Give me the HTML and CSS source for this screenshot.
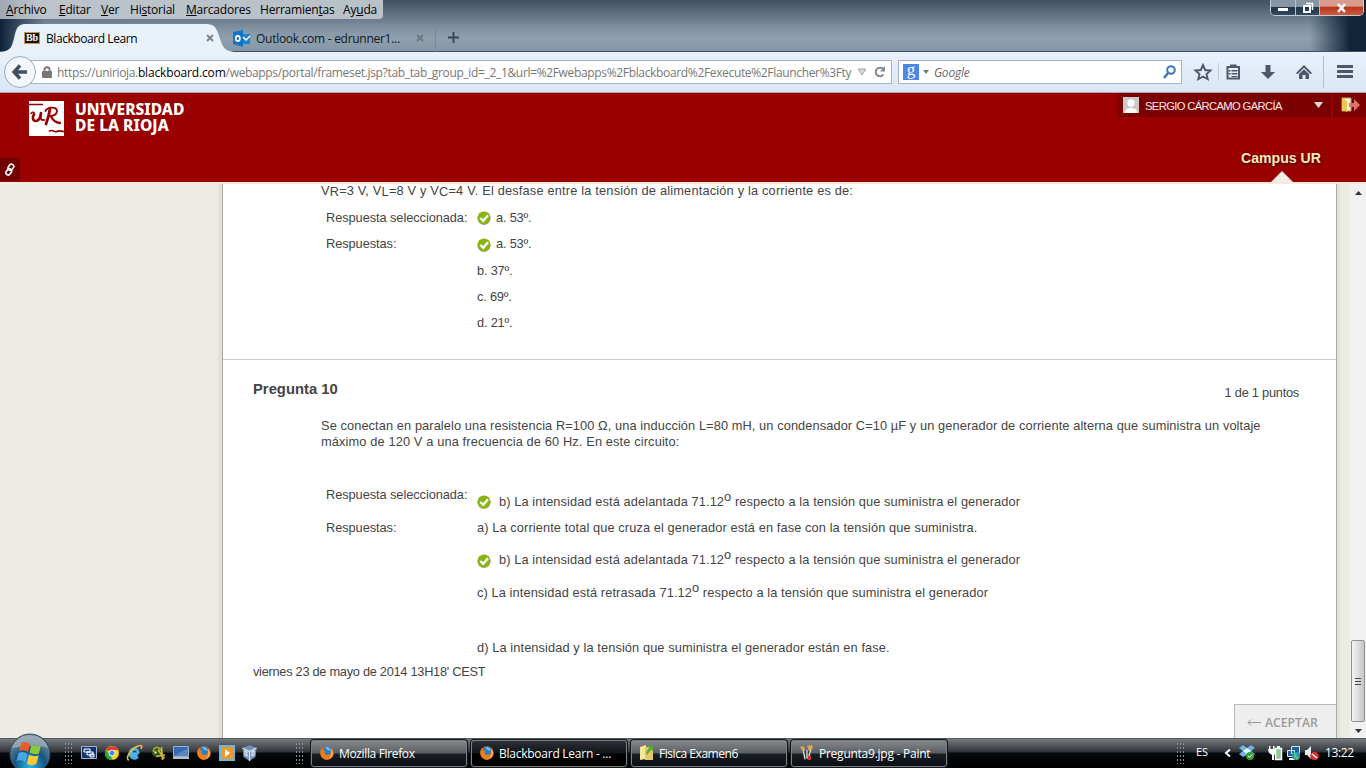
FILE: index.html
```html
<!DOCTYPE html>
<html lang="es">
<head>
<meta charset="utf-8">
<title>Blackboard Learn</title>
<link rel="stylesheet" href="styles.css">
</head>
<body>
<svg class="defs" width="0" height="0" aria-hidden="true">
  <defs>
    <symbol id="check" viewBox="0 0 14 14"><circle cx="7" cy="7.300" r="6.600" fill="#9aa878"/><circle cx="7" cy="6.800" r="6.400" fill="#8ab414"/><path d="M3.3 7 6.2 9.800 11 4.200" fill="none" stroke="#fff" stroke-width="2.3"/></symbol>
    <symbol id="firefox" viewBox="0 0 14 14"><circle cx="7" cy="7" r="6.800" fill="#e8641b"/><circle cx="7.200" cy="5.600" r="5" fill="#2b80c4"/><path d="M5 1.500C8 .5 10 2 11 5L8 4Z" fill="#7cc8ee"/><path d="M.4 5C1 3 2 2 2.300 2L3 4 5 5 4.500 7C5 9 8 10 10 8 11 7 11.500 5 11 3 12 4 13 6 12.800 8 12 12 9 14 6 13.700 2 13 0 9 .4 5Z" fill="#ef7d1c"/><path d="M11 2.800C14 6 13 11 9 13 12 10 12 7 11 2.800Z" fill="#ffd45c"/></symbol>
    <symbol id="close" viewBox="0 0 8 8"><path d="m1 1 6 6m0-6-6 6" stroke="currentColor" stroke-width="2"/></symbol>
  </defs>
</svg>
<div class="screen">
  <div class="titlebar">
    <div class="topline">
      <nav class="menu"><span class="m1"><u>A</u>rchivo</span><span class="m2"><u>E</u>ditar</span><span class="m3"><u>V</u>er</span><span class="m4">Hi<u>s</u>torial</span><span class="m5"><u>M</u>arcadores</span><span class="m6">Herramien<u>t</u>as</span><span class="m7">Ay<u>u</u>da</span></nav>
      <div class="winbtns">
        <span class="wb"><svg width="12" height="10"><rect x="1" y="5" width="10" height="3" fill="#fff"/></svg></span>
        <span class="wb"><svg width="12" height="12"><path d="M4 1.500h6.500V8" fill="none" stroke="#fff" stroke-width="1.500"/><path d="M2 4h6v6H2Z" fill="none" stroke="#fff" stroke-width="2"/></svg></span>
        <span class="wb wclose"><svg width="12" height="10"><path d="m2 1 7 8m0-8-7 8" stroke="#fff" stroke-width="2.600"/></svg></span>
      </div>
    </div>
    <div class="tabs">
      <div class="tab active">
        <svg class="tabshape" width="222" height="28"><path d="M0 28C12 27 12 22 15 10 17 2 20 0 26 0H204C214 0 215 2 218 9 222 20 222 27 235 28Z" fill="#e9f1fb"/></svg>
        <span class="bb">Bb</span><span class="tabtitle t1">Blackboard Learn</span><svg class="x" width="8" height="8"><use href="#close"/></svg>
      </div>
      <div class="tab second">
        <svg width="17" height="17"><path d="M0 2 10 0v17L0 14Z" fill="#1274c4"/><path d="M10 4h7v10h-7Z" fill="#1b82d4"/><path d="m10 7 3 3 4-4" fill="none" stroke="#fff" stroke-width="1.500"/><ellipse cx="4.800" cy="8.500" rx="2.100" ry="2.600" fill="none" stroke="#fff" stroke-width="1.700"/></svg>
        <span class="tabtitle t2">Outlook.com - edrunner1...</span><svg class="x" width="8" height="8"><use href="#close"/></svg>
      </div>
      <svg class="plus" width="11" height="11"><path d="M5.500 0v11M0 5.500h11" stroke="#344454" stroke-width="1.800"/></svg>
    </div>
  </div>

  <div class="toolbar">
    <div class="back"><svg width="16" height="16"><path d="M8 1.500 2 8l6 6.500M2.500 8H15" fill="none" stroke="#414e5f" stroke-width="3.400"/></svg></div>
    <div class="url">
      <svg width="10" height="12"><path d="M2.500 6V3.500C2.500.5 7.500.5 7.500 3.500V6" fill="none" stroke="#777" stroke-width="1.800"/><rect y="5" width="10" height="7" rx="1" fill="#777"/></svg>
      <span class="address">https://unirioja.<b>blackboard.com</b>/webapps/portal/frameset.jsp?tab_tab_group_id=_2_1&amp;url=%2Fwebapps%2Fblackboard%2Fexecute%2Flauncher%3Fty</span>
      <svg class="tri" width="10" height="8"><path d="M1 1h8L5 7Z" fill="#d4d7db" stroke="#a5a8ad"/></svg>
      <svg class="reload" width="12" height="12"><path d="M9.500 8.500A4.300 4.300 0 1 1 9 2.800" fill="none" stroke="#7d8a94" stroke-width="2"/><path d="M11 0v5.500H6Z" fill="#7d8a94"/></svg>
    </div>
    <div class="search">
      <span class="g">g</span><svg width="6" height="4"><path d="M0 0h6L3 4Z" fill="#777"/></svg><span class="google">Google</span>
      <svg class="mag" width="13" height="14"><circle cx="8" cy="5" r="3.800" fill="#eef7ff" stroke="#4077b3" stroke-width="2"/><path d="m5 8-4 5" stroke="#4077b3" stroke-width="2.500"/></svg>
    </div>
    <svg class="tools" width="168" height="40" fill="#4b5968">
      <path d="m13 13 2.200 5 5.300.5-4 3.500 1.200 5.200L13 24.500l-4.700 2.700L9.500 22l-4-3.500 5.300-.5Z" fill="none" stroke="#4b5968" stroke-width="1.900"/>
      <path d="M28.500 11v17" stroke="#c2cad3"/>
      <path d="M37.500 15h11.500v11.500H37.500Z" fill="none" stroke="#4b5968" stroke-width="2"/><path d="M40 12.500h6.500V16H40ZM41.500 18h6v1.500h-6Zm0 3h6v1.500h-6Zm0 3h6v1h-6ZM38.500 18h2v1.500h-2Zm0 3h2v1.500h-2Z"/>
      <path d="M75.500 13h5v7h4.500L78 27l-7-7h4.500Z"/>
      <path d="m106 21 8-8 8 8-1.500 1.300L114 15.800 107.500 22.300Zm3 1 5-4.800 5 4.800v5h-3.500v-4h-3v4H109Z"/>
      <path d="M133.500 4v32" stroke="#b7c0ca"/>
      <path d="M147 13h16v3h-16Zm0 5h16v3h-16Zm0 5h16v3h-16Z"/>
    </svg>
  </div>

  <header class="brand">
    <div class="brandleft">
      <div class="logo">
        <svg width="35" height="35"><path d="M0 0h35v35H0Z" fill="#fff"/><path d="M0 3.500h14M20 30.500c3-3 6 1.500 8 0s4 0 7 0" fill="none" stroke="#900" stroke-width="1.600"/><g fill="none" stroke="#900" stroke-linecap="round"><path d="M2 12.500c2-2 3.500-1.500 3 1" stroke-width="1.500"/><path d="M5 13c-2 4-1 7 1.500 7 3 0 5-3 5.500-8" stroke-width="2.600"/><path d="M12 12c-1 5-.5 7.500 3 7" stroke-width="2"/><path d="M21 8c-1 6-2.500 11-4 15" stroke-width="2.800"/><path d="M16.500 10C18 6 28 5 28 10c0 3.500-4 5-7 5" stroke-width="1.900"/><path d="M22 15.500c2 4 4 6 9 6.500" stroke-width="2.300"/></g></svg>
        <div class="logotext"><span>UNIVERSIDAD</span><span>DE LA RIOJA</span></div>
      </div>
      <div class="link"><svg width="12" height="13"><g fill="none" stroke="#fff" stroke-width="1.600"><rect x="4.800" y="1" width="4.500" height="6.500" rx="2.200" transform="rotate(35 7 4)"/><rect x="2.400" y="5.500" width="4.500" height="6.500" rx="2.200" transform="rotate(35 4.500 9)"/></g></svg></div>
    </div>
    <div class="brandright">
      <div class="userrow">
        <div class="user"><svg width="16" height="16"><path d="M0 0h16v16H0Z" fill="#cbc8c5"/><circle cx="8" cy="6" r="3.700" fill="#fff"/><path d="M2 16c0-4 3-5 6-5s6 1 6 5Z" fill="#fff"/></svg><span>SERGIO CÁRCAMO GARCÍA</span><svg class="udown" width="9" height="6"><path d="M0 0h9L4.500 6Z" fill="#eadada"/></svg></div>
        <div class="exit"><svg width="20" height="16"><path d="M1 1h9v13H1Z" fill="#f8f3dc" stroke="#c59d43"/><path d="m1 1 5 3v11l-5-3Z" fill="#efc64c"/><path d="M8 6h5V2l6 6-6 6v-4H8Z" fill="#dc7470"/></svg></div>
      </div>
      <div class="campus"><span>Campus UR</span><i></i></div>
    </div>
  </header>

  <main class="main">
    <aside class="side"></aside>
    <section class="sheet">
      <div class="q9">
        <p class="lead">V<sub>R</sub>=3 V, V<sub>L</sub>=8 V y V<sub>C</sub>=4 V. El desfase entre la tensión de alimentación y la corriente es de:</p>
        <div class="row"><label>Respuesta seleccionada:</label><svg class="ok" width="14" height="14"><use href="#check"/></svg><span class="short">a. 53º.</span></div>
        <div class="row"><label>Respuestas:</label><svg class="ok low" width="14" height="14"><use href="#check"/></svg><span class="short">a. 53º.</span></div>
        <div class="row more"><label></label><span class="short">b. 37º.</span></div>
        <div class="row"><label></label><span class="short">c. 69º.</span></div>
        <div class="row"><label></label><span class="short">d. 21º.</span></div>
      </div>
      <div class="q10">
        <div class="qhead"><h3>Pregunta 10</h3><span>1 de 1 puntos</span></div>
        <p class="question"><span class="l1">Se conectan en paralelo una resistencia R=100 Ω, una inducción L=80 mH, un condensador C=10 µF y un generador de corriente alterna que suministra un voltaje</span><br><span class="l2">máximo de 120 V a una frecuencia de 60 Hz. En este circuito:</span></p>
        <div class="row tall"><label class="up">Respuesta seleccionada:</label><svg class="ok wide" width="14" height="14"><use href="#check"/></svg><span class="long">b) La intensidad está adelantada 71.12<sup>o</sup> respecto a la tensión que suministra el generador</span></div>
        <div class="row"><label>Respuestas:</label><span class="long">a) La corriente total que cruza el generador está en fase con la tensión que suministra.</span></div>
        <div class="row mid first"><label></label><svg class="ok wide low" width="14" height="14"><use href="#check"/></svg><span class="long">b) La intensidad está adelantada 71.12<sup>o</sup> respecto a la tensión que suministra el generador</span></div>
        <div class="row mid"><label></label><span class="long">c) La intensidad está retrasada 71.12<sup>o</sup> respecto a la tensión que suministra el generador</span></div>
        <div class="row gap"><label></label><span class="long">d) La intensidad y la tensión que suministra el generador están en fase.</span></div>
      </div>
      <div class="stamp">viernes 23 de mayo de 2014 13H18' CEST</div>
      <div class="actions"><div class="accept"><svg width="14" height="7"><path d="M4 .5 1 3.500l3 3M1 3.500h13" fill="none" stroke="#999"/></svg><span>ACEPTAR</span></div></div>
    </section>
    <div class="margin"></div>
    <div class="scroll">
      <svg width="7" height="4"><path d="M0 4h7L3.500 0Z" fill="#333"/></svg>
      <div class="thumb"><i></i><i></i><i></i></div>
      <svg width="7" height="4"><path d="M0 0h7L3.500 4Z" fill="#333"/></svg>
    </div>
  </main>

  <footer class="taskbar">
    <svg class="orb" width="44" height="35"><defs><radialGradient id="og" cx=".5" cy=".8" r=".7"><stop offset="0" stop-color="#32b8e8"/><stop offset=".55" stop-color="#14547e"/><stop offset="1" stop-color="#738797"/></radialGradient></defs><circle cx="22" cy="21" r="20" fill="url(#og)" stroke="#34495a"/><path d="M4 15C9-2 35-2 40 15 28 11 16 13 4 15Z" fill="#b2c0c9" opacity=".6"/><path d="M13.500 10c3-2 6-1 8.500 1l-2 8c-3-2-6-2-9-1Z" fill="#ee5b2b"/><path d="M23.500 11.500c3 2 6.500 2 9.500 0l-2 9c-3 1-6 1-9.500-1Z" fill="#8dc63f"/><path d="M10.500 20c3-2 6.500-1 9 1l-2 8c-3-2-6-2-9-1Z" fill="#45a7e8"/><path d="M21 21.500c3 2 6.500 2 9.500 1l-2 8c-3 2-6 2-9.500 0Z" fill="#ffc93c"/></svg>
    <i class="grip g1"></i>
    <div class="quick">
      <svg width="16" height="14"><path d="M.5.5h15v12H.5Z" fill="#17356c" stroke="#9cb3cf"/><path d="M3 3h6v3H3Zm3 3h6v3H6Zm3 2h4v3H9Z" fill="#1f4f98" stroke="#fff"/></svg>
      <svg width="14" height="14"><circle cx="7" cy="7" r="7" fill="#fcd116"/><path d="M7 7 1 3.500C4-1 11-1 13.500 4H7Z" fill="#e23b2e"/><path d="M1 3.500 5 9l3 4.900C1 15-2 8 1 3.500Z" fill="#2fa34b"/><circle cx="7" cy="7" r="3.300" fill="#fff"/><circle cx="7" cy="7" r="2.500" fill="#4285f4"/></svg>
      <svg width="17" height="16"><path d="M12.500 8.500H5.500C6 11.500 10 11.500 11 9.800M5.300 7.500C6 3.500 12 3 12.500 8.500M11.800 11.500C9 15.500 4 13 4 8.500 4 4 8 2.500 10.500 4" fill="none" stroke="#4ab3ee" stroke-width="2.400"/><path d="M3 15C-1 15 3 5.500 10 2s6 0 5 2" fill="none" stroke="#e7bd38" stroke-width="1.600"/></svg>
      <svg width="15" height="16"><circle cx="6" cy="6.500" r="5.500" fill="#34551b"/><path d="M2.500 7c0-6 6-6 7-1" fill="none" stroke="#93a848" stroke-width="1.800"/><circle cx="4.500" cy="7.500" r="1.200" fill="#d9e6a4"/><path d="m10.500 2 1 13M5 11.500l9-1.500M7 5l6.500 8.500" stroke="#d4b638" stroke-width="1.600"/></svg>
      <svg width="16" height="14"><path d="M.5.5h15v10H.5Z" fill="#3769b0" stroke="#90b3d8"/><path d="m1 10 14-8v8Z" fill="#5c84bb"/><path d="M0 11h16v2H0Z" fill="#b4bec6"/></svg>
      <svg width="14" height="14"><use href="#firefox"/></svg>
      <svg width="16" height="16"><path d="M0 0h16v16H0Z" fill="#67b9dd"/><path d="M2 2h12v12H2Z" fill="#f0962a"/><path d="m6 4 5 4-5 4Z" fill="#fff"/></svg>
      <svg width="15" height="16"><path d="m7.500 0 7 3-1 9-6 4-6-4-1-9Z" fill="#718eb5"/><path d="m.5 3 7 3.500 7-3.500M7.500 6.500V16M3 6l2 1v4l-2-1Zm9 0-2 1v4l2-1Z" fill="none" stroke="#dce7f3" stroke-width="1.200"/></svg>
    </div>
    <i class="grip g2"></i>
    <div class="tasks">
      <div class="task"><svg width="14" height="14"><use href="#firefox"/></svg><span class="k1">Mozilla Firefox</span></div>
      <div class="task on"><svg width="14" height="14"><use href="#firefox"/></svg><span class="k2">Blackboard Learn - ...</span></div>
      <div class="task"><svg width="14" height="16"><path d="M0 2 6 0v14l-6 1Z" fill="#f8e69a"/><path d="M5 2h8v13H5Z" fill="#e3c768"/><path d="m8 1 5 0v5l-2-1-4 5-1-3 3-4Z" fill="#4fb52f"/></svg><span class="k3">Fisica Examen6</span></div>
      <div class="task"><svg width="14" height="16"><path d="M3 6h8l-1 9H4Z" fill="#343b42"/><path d="m3 4 2 10M11 4 8 14M7 5v8" stroke="#ddd" stroke-width="1.300"/><path d="M0 2c3-2 5 0 5 3H2ZM7 1l5-1 1 3-4 3Z" fill="#d9a755"/><path d="M8 11h3v4H8Z" fill="#c8321f"/></svg><span class="k4">Pregunta9.jpg - Paint</span></div>
    </div>
    <i class="grip g3"></i>
    <div class="tray">
      <span class="es">ES</span>
      <svg class="chev" width="7" height="8"><path d="M6 .5 2 4l4 3.500" fill="none" stroke="#fff" stroke-width="2"/></svg>
      <svg class="drop" width="16" height="16"><path d="m4 0 4 3 4-3 4 3-4 3 4 3-4 3-4-2-4 2-4-3 4-3-4-3Z" fill="#6bb6e8"/><path d="m4 6 4-3 4 3-4 3Z" fill="#e5f6ff"/><circle cx="11" cy="11" r="4" fill="#3a9d36"/><path d="m9 11 1.500 1.500L13 9.500" fill="none" stroke="#fff"/></svg>
      <svg class="power" width="15" height="16"><path d="M7.500 3.500h6v11h-6Z" fill="#8fc795" stroke="#fff" stroke-width="1.500"/><path d="M9 1h3v2H9ZM0 4h8v4L6 10v5H4v-5L1 8ZM1 1h1.500v3H1Zm4 0h1.500v3H5Z" fill="#fff"/></svg>
      <svg class="net" width="15" height="16"><path d="M5.500 1.500h8v7h-8ZM1.500 5.500h7v6h-7Z" fill="#1762a4" stroke="#dce9f2"/><path d="M3 14h6" stroke="#fff" stroke-width="2"/><circle cx="10" cy="11" r="4" fill="#2495c8"/><path d="m8 8 3 1-1 2 3 2-2 2-3-3Z" fill="#62c657"/></svg>
      <svg class="vol" width="16" height="16"><path d="M1 5h2l4-4v13l-4-4H1Z" fill="#e9eef2"/><circle cx="10.500" cy="11" r="4.300" fill="#d73030"/><path d="m8 9 5 4" stroke="#fff" stroke-width="1.500"/></svg>
      <span class="clock">13:22</span>
    </div>
  </footer>
</div>
</body>
</html>
```

FILE: styles.css
```css
* { box-sizing: border-box; }
body { margin: 0; font-family: "Open Sans", "Noto Sans", sans-serif; font-size: 12px; }
svg { display: block; flex: none; }
.defs { position: absolute; }
.screen { width: 1366px; height: 768px; overflow: hidden; display: flex; flex-direction: column; }

.titlebar { height: 52px; flex: none; border-bottom: 1px solid #42505f; background: linear-gradient(90deg, #0d2238 0, rgba(13,34,56,0) 45px, rgba(13,34,56,0) 1310px, #10253a 1350px), linear-gradient(#3e5061 0, #5f7182 14px, #8395a5 30px, #8e9fae 38px, #8596a6 51px); }
.topline { height: 24px; display: flex; justify-content: space-between; align-items: flex-start; }
.menu { width: 383px; height: 19px; padding-left: 6px; display: flex; line-height: 19px; border-radius: 0 0 4px 0; white-space: nowrap; background: linear-gradient(90deg, #a0a9b2, #bcc3ca 10%, #b9c1c8); color: #000; }
.menu span { flex: none; letter-spacing: -.2px; }
.m1 { width: 53px; } .m2 { width: 42px; } .m3 { width: 29px; } .m4 { width: 56px; } .m5 { width: 74px; } .m6 { width: 83px; }
.menu u { text-underline-offset: 1px; }
.winbtns { display: flex; width: 94px; height: 16px; margin-right: 2px; border: 1px solid #c3ccd5; border-top: 0; border-radius: 0 0 5px 5px; overflow: hidden; }
.wb { width: 25px; display: flex; align-items: center; justify-content: center; border-right: 1px solid #b6bfc8; background: linear-gradient(#8796a5 0 45%, #20344a 50%, #34495e); }
.wclose { width: 43px; border: 0; background: linear-gradient(#d99b8c 0 40%, #b9381e 50%, #cf5b3c); }
.tabs { height: 28px; display: flex; align-items: stretch; }
.tab { display: flex; align-items: center; position: relative; color: #000; }
.active { width: 233px; padding-left: 24px; }
.tabshape { position: absolute; left: 0; top: 0; width: 235px; overflow: visible; }
.bb { position: relative; width: 16px; height: 12px; background: #141414; border: 1px solid #c79a3b; color: #fff; font: bold 10px/10px "Liberation Serif", serif; text-align: center; }
.tabtitle { position: relative; white-space: nowrap; }
.t1 { width: 160px; margin-left: 6px; letter-spacing: -.43px; }
.x { position: relative; color: #6d7782; }
.active .x { color: #7c838b; }
.second { width: 203px; border-right: 1px solid #78899a; }
.t2 { width: 160px; margin-left: 6px; letter-spacing: -.28px; }
.second .tabtitle { color: #101820; }
.plus { margin: 8px 0 0 12px; }

.toolbar { height: 41px; flex: none; display: flex; background: linear-gradient(#e9f1fb, #dbe7f6); border-bottom: 1px solid #b3a3b0; }
.back { position: relative; z-index: 1; width: 32px; height: 32px; margin: 4px 0 0 4px; border: 1px solid #9baabc; border-radius: 50%; background: #f3f7fc; display: flex; align-items: center; justify-content: center; }
.url { width: 868px; height: 24px; margin: 8px 0 0 -12px; padding-left: 17px; border: 1px solid #a5b3c5; background: #fff; display: flex; align-items: center; }
.address { width: 795px; margin-left: 5px; flex: none; white-space: nowrap; color: #777; letter-spacing: -.34px; }
.address b { font-weight: 400; color: #000; letter-spacing: -.15px; }
.tri { margin-left: 5px; } .reload { margin-left: 7px; }
.search { width: 284px; height: 24px; margin: 8px 0 0 6px; padding: 0 5px 0 4px; border: 1px solid #a5b3c5; background: #fff; display: flex; align-items: center; }
.g { width: 16px; height: 16px; margin-right: 4px; background: #4b86e8; color: #fff; font: 17px/11px "Liberation Serif", serif; text-align: center; }
.google { margin-left: 5px; width: 231px; font-style: italic; color: #666; letter-spacing: -.2px; }
.tools { margin-left: 8px; }

.brand { height: 89px; flex: none; background: #900; display: flex; justify-content: space-between; font-family: "Liberation Sans", Arial, sans-serif; }
.brandleft { display: flex; flex-direction: column; justify-content: space-between; }
.logo { display: flex; padding: 8px 0 0 29px; }
.logotext { margin: 1px 0 0 11px; height: 32px; color: #fff; font: 800 15.6px/15.5px "Noto Sans", sans-serif; white-space: nowrap; }
.logotext span { display: block; }
.link { width: 20px; height: 23px; margin-bottom: 1px; padding: 5px 0 0 4px; background: #720000; }
.brandright { width: 249px; display: flex; flex-direction: column; justify-content: space-between; }
.userrow { display: flex; gap: 2px; height: 24px; }
.user { width: 214px; display: flex; align-items: center; padding-left: 6px; background: #7b0000; color: #fbeaea; font-size: 11.2px; }
.user span { width: 169px; margin: 1px 0 0 6px; white-space: nowrap; letter-spacing: -.62px; }
.exit { width: 33px; padding: 4px 0 0 8px; background: #7b0000; }
.campus { width: 84px; margin-left: 122px; display: flex; flex-direction: column; align-items: center; color: #ffe9b8; font-weight: bold; font-size: 14.1px; line-height: 17px; white-space: nowrap; text-shadow: 1px 1px 3px #300; }
.campus i { width: 0; margin: 4px 0 0 1px; border: 11px solid transparent; border-top: 0; border-bottom-color: #f3ede4; }

.main { height: 556px; flex: none; display: flex; border-top: 2px solid #fae9db; background: #edebe4; font-family: "Liberation Sans", Arial, sans-serif; font-size: 12.8px; color: #444; }
.side { width: 222px; background: linear-gradient(90deg, #edebe3 216px, #dedbd5); }
.sheet { width: 1115px; background: #fff; border: solid #aaa; border-width: 0 1px; display: flex; flex-direction: column; }
.q9 { height: 176px; padding-left: 98px; border-bottom: 1px solid #ccc; }
.lead { margin: 0 0 7px; height: 14px; line-height: 14px; white-space: nowrap; letter-spacing: .18px; }
sub, sup { font-size: inherit; line-height: 0; }
sub { vertical-align: -1px; } sup { vertical-align: 5px; }
.row { height: 26px; display: flex; align-items: center; padding-left: 5px; white-space: nowrap; line-height: 26px; }
.row label { width: 151px; letter-spacing: -.07px; }
.short { letter-spacing: -.2px; }
.long { letter-spacing: .1px; }
.ok { margin: 0 5px 0 0; } .ok.wide { margin-right: 8px; } .ok.low { margin-top: 2px; }
.more { margin-top: 1px; }
.q10 { padding-left: 98px; height: 301px; }
.qhead { height: 58px; margin-left: -68px; padding: 20px 37px 0 0; display: flex; justify-content: space-between; }
.qhead h3 { margin: 0; font-size: 14.8px; line-height: 18px; }
.qhead span { line-height: 26px; letter-spacing: -.24px; }
.question { margin: 0 0 39px; line-height: 16px; white-space: nowrap; }
.l1 { letter-spacing: .093px; } .l2 { letter-spacing: .13px; }
.tall { height: 26px; } .up { align-self: flex-start; margin-top: -7px; }
.mid { margin-top: 6px; height: 27px; }
.first { margin-top: 5px; }
.gap { margin-top: 29px; }
.stamp { padding-left: 30px; line-height: 24px; margin-top: -1px; letter-spacing: -.28px; }
.actions { margin-top: auto; display: flex; justify-content: flex-end; }
.accept { width: 102px; height: 34px; padding: 2px 0 0 12px; border: 1px solid #bbb; border-width: 1px 0 0 1px; background: #eee; display: flex; align-items: center; gap: 4px; color: #999; font: 600 12.2px "Open Sans", sans-serif; }
.margin { width: 13px; background: linear-gradient(90deg, #e0ddd4, #edebe3 5px); }
.scroll { width: 16px; background: #f1f1f1; display: flex; flex-direction: column; align-items: center; padding: 7px 0 5px; }
.thumb { width: 14px; height: 82px; margin: auto 0 7px; border: 1px solid #929292; border-radius: 2px; background: linear-gradient(90deg, #f4f4f4, #ddd 50%, #c5c5c5); display: flex; flex-direction: column; align-items: center; justify-content: center; gap: 2px; }
.thumb i { width: 6px; height: 1px; background: #444; }

.taskbar { position: relative; height: 30px; flex: none; display: flex; align-items: center; background: linear-gradient(#33383d 0, #767a7e 1px, #55595d 7px, #303438 14px, #05090d 15px, #000); color: #fff; }
.orb { position: absolute; left: 8px; top: -5px; }
.grip { width: 8px; height: 22px; background: radial-gradient(circle, #8c8f92 0 .6px, transparent 1px) 0 0 / 3px 4px; }
.g1 { margin-left: 64px; }
.quick { width: 184px; margin-left: 9px; display: flex; align-items: center; gap: 7.6px; }
.g2 { margin-left: 30px; }
.tasks { display: flex; gap: 4px; margin-left: 8px; }
.task { width: 156px; height: 27px; padding-left: 8px; display: flex; align-items: center; gap: 5px; border: 1px solid #7b7f83; border-radius: 3px; background: linear-gradient(#85888b 0, #5b5f63 12px, #191e23 13px, #0b0f14); box-shadow: 0 0 0 1px #15181b; white-space: nowrap; }
.task span { letter-spacing: -.25px; }
.task .k1 { letter-spacing: -.35px; }
.task .k3 { letter-spacing: -.45px; }
.on { background: linear-gradient(#2d3135, #111519 12px, #000 13px); }
.g3 { margin-left: 229px; }
.tray { display: flex; align-items: center; margin-left: 12px; }
.es { font-size: 11px; width: 28px; margin-top: -3px; }
.drop { margin-left: 8px; } .power { margin-left: 13px; } .net { margin-left: 3px; } .vol { margin-left: 3px; }
.clock { margin: -1px 0 0 5px; white-space: nowrap; letter-spacing: -.4px; }
```
